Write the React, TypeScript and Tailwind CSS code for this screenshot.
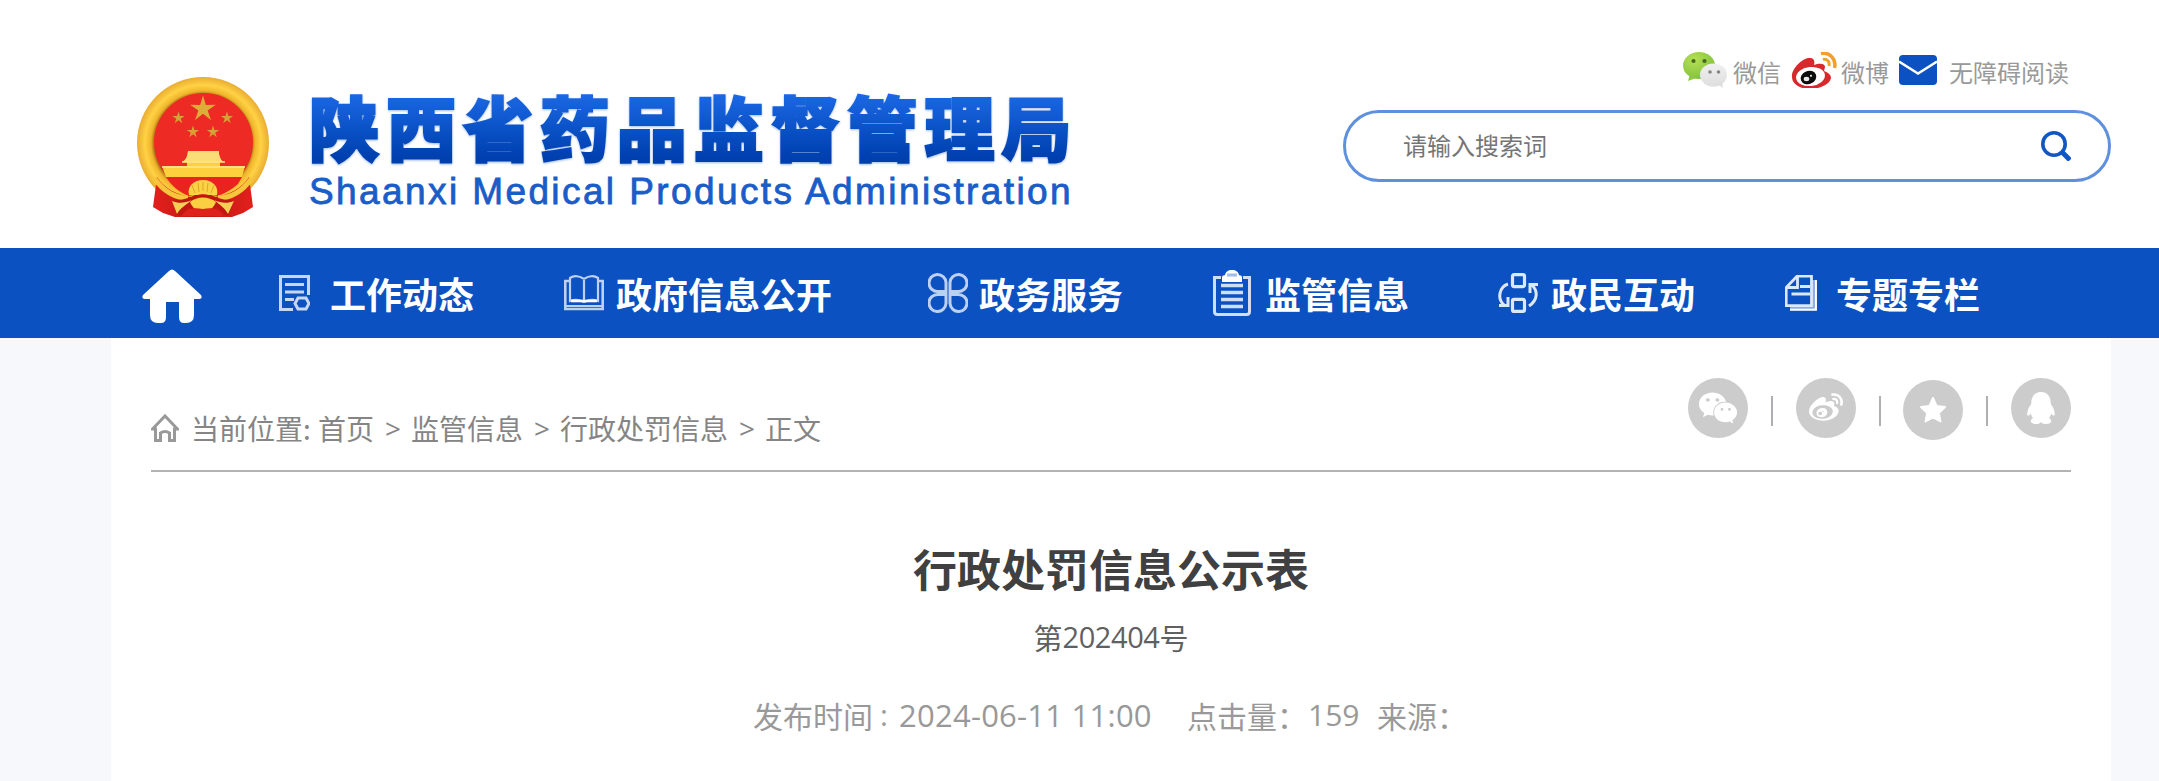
import { FaWeixin, FaWeibo } from "react-icons/fa";

const star = (cx: number, cy: number, r: number) =>
  Array.from({ length: 10 }, (_, i) => {
    const rad = i % 2 === 0 ? r : r * 0.36;
    const a = -Math.PI / 2 + (i * Math.PI) / 5;
    return `${cx + rad * Math.cos(a)},${cy + rad * Math.sin(a)}`;
  }).join(" ");

function Emblem() {
  return (
    <svg width="132" height="140" viewBox="0 0 132 140" className="shrink-0">
      <defs>
        <radialGradient id="ring" cx="0.5" cy="0.5" r="0.5">
          <stop offset="0.74" stopColor="#a87414" />
          <stop offset="0.79" stopColor="#f0b52c" />
          <stop offset="0.88" stopColor="#ffd244" />
          <stop offset="1" stopColor="#e9ac32" />
        </radialGradient>
        <linearGradient id="drape" x1="0" y1="0" x2="1" y2="0">
          <stop offset="0" stopColor="#e2201c" />
          <stop offset="0.5" stopColor="#c11712" />
          <stop offset="1" stopColor="#e2201c" />
        </linearGradient>
      </defs>
      <circle cx="66" cy="66" r="66" fill="url(#ring)" />
      <circle cx="66.5" cy="65.5" r="49.5" fill="#ee2a24" />
      <polygon points={star(66, 32, 13.5)} fill="#dfae38" />
      <polygon points={star(41.5, 41, 6.5)} fill="#d9a035" />
      <polygon points={star(90, 41, 6.5)} fill="#d9a035" />
      <polygon points={star(56, 55, 6.5)} fill="#d9a035" />
      <polygon points={star(76, 55, 6.5)} fill="#d9a035" />
      <path d="M51 74h31v3l1 3c1 3 2 4 4 5H45c2-1 4-3 5-6z" fill="#fbdd78" />
      <path d="M50 84h33v5h25l-3 11H29l-4-11h25z" fill="#fdd13e" />
      <path d="M45 85h43M25 90h83" stroke="#ffe98c" strokeWidth="1.5" />
      <path d="M29 100h76l-4 7c-7 6-14 10-21 12H52c-8-3-16-8-23-19z" fill="#e9241f" />
      <path d="M20 100c7 11 20 18 34 20h24c14-2 27-9 34-20l4 30-10 6-11 4H38l-12-4-10-6z" fill="url(#drape)" />
      <path d="M17 101c10 14 22 20 34 20M115 101c-10 14-22 20-34 20" fill="none" stroke="#f5c63c" strokeWidth="5" />
      <path d="M52 118c-2-8 4-15 14-15s16 7 14 15c-6 2-10-1-14-1s-8 3-14 1z" fill="#fbd244" />
      <path d="M58 116l-3-8M62 115l-1-9M66 114v-9M70 115l1-9M74 116l3-8" stroke="#e1a52a" />
      <path d="M35 124c10-1 18-3 23-6h16c6 3 13 5 23 6l-6 15c-5-2-7-5-11-9-6 6-22 6-28 0-4 4-6 8-11 9z" fill="#c11611" />
      <path d="M35 124c7 3 13 2 20-1-6 5-12 8-15 14zM97 124c-7 3-13 2-20-1 6 5 11 8 14 14z" fill="#f4ce55" />
      <path d="M53 125c7-6 19-6 26 0-5 13-21 13-26 0z" fill="#fbcf42" />
      <path d="M45 139c4-7 10-9 21-7 10-2 17 0 20 7z" fill="#df211c" />
    </svg>
  );
}

function WechatColor() {
  return (
    <svg width="44" height="36" viewBox="0 0 44 36" className="shrink-0">
      <defs>
        <radialGradient id="wg" cx="0.35" cy="0.3" r="0.75">
          <stop offset="0" stopColor="#b5df55" />
          <stop offset="1" stopColor="#80c13c" />
        </radialGradient>
        <linearGradient id="ww" x1="0" y1="0" x2="0" y2="1">
          <stop offset="0" stopColor="#f0f0f0" />
          <stop offset="1" stopColor="#dedede" />
        </linearGradient>
      </defs>
      <ellipse cx="16" cy="13.5" rx="16" ry="13.5" fill="url(#wg)" />
      <path d="M7 22l-2 7 8-3z" fill="#8bc943" />
      <circle cx="10.5" cy="9" r="2.1" fill="#45691d" />
      <circle cx="21.5" cy="9" r="2.1" fill="#45691d" />
      <ellipse cx="30.5" cy="23" rx="13.5" ry="11.5" fill="url(#ww)" />
      <path d="M34 32l6 4-1-7z" fill="#dedede" />
      <circle cx="27" cy="20" r="1.8" fill="#858585" />
      <circle cx="35.5" cy="20" r="1.8" fill="#858585" />
    </svg>
  );
}

function WeiboColor() {
  return (
    <svg width="46" height="36" viewBox="0 0 46 36" className="shrink-0">
      <path d="M1 25C0 17 12 5 19 6c4 0 5 3 4 7 5-2 11-2 11 2l-1 4c5 2 7 4 7 7-1 6-11 11-21 11C9 37 1 32 1 25z" fill="#d8282b" />
      <ellipse cx="19.5" cy="24.5" rx="14.5" ry="9.5" fill="#fff" transform="rotate(-7 19.5 24.5)" />
      <ellipse cx="17.5" cy="25.5" rx="8" ry="6.5" fill="#0b0b0b" transform="rotate(-22 17.5 25.5)" />
      <ellipse cx="15.5" cy="27" rx="2.8" ry="2.2" fill="#e8e8e8" />
      <circle cx="20" cy="23.8" r="1.1" fill="#e8e8e8" />
      <path d="M30 1.5c9-2 15.5 6 13.5 14.5" fill="none" stroke="#efa02e" strokeWidth="3.5" />
      <path d="M32 7.5c4-1 7 2 6 6.5" fill="none" stroke="#efa02e" strokeWidth="3" />
    </svg>
  );
}

const navItems = [
  {
    label: "工作动态",
    item: "ml-[77px]",
    gap: "mr-[20px]",
    icon: (
      <svg width="31" height="36" viewBox="0 0 31 36" fill="none" stroke="#c6d7f3" strokeWidth="3">
        <path d="M29.5 20V1.5H1.5v33H14M6 9.5h19M6 17h19M6 24.5h9" />
        <path d="M19 23h8l3 5.500-3 5.500h-8l-3-5.500z" />
      </svg>
    ),
  },
  {
    label: "政府信息公开",
    item: "ml-[90px]",
    gap: "mr-[12px]",
    icon: (
      <svg width="40" height="36" viewBox="0 0 40 36" fill="none" stroke="#bdd0f1" strokeWidth="2.6">
        <path d="M6 6H1.300v28h37.400V6H34" />
        <path d="M1.500 31h37" strokeWidth="2" />
        <path d="M20 5v21M20 4C16 1 10 0 6 3v23c5-2 10-1 14 1 4-2 9-3 14-1V3c-4-3-10-2-14 1" strokeWidth="2.2" />
        <path d="M7 26h26" stroke="#fff" />
      </svg>
    ),
  },
  {
    label: "政务服务",
    item: "ml-[96px]",
    gap: "mr-[11px]",
    icon: (
      <svg width="40" height="40" viewBox="0 0 40 40" fill="none" stroke="#bdd0f1" strokeWidth="3">
        <path d="M18 18.500h-8a8.500 8.500 0 1 1 8-9zM22 18.500h8a8.500 8.500 0 1 0-8-9zM18 21.500h-8a8.500 8.500 0 1 0 8 9zM22 21.500h8a8.500 8.500 0 1 1-8 9z" />
      </svg>
    ),
  },
  {
    label: "监管信息",
    item: "ml-[90px]",
    gap: "mr-[14px]",
    icon: (
      <svg width="38" height="46" viewBox="0 0 38 46" fill="none" stroke="#d0def5" strokeWidth="3">
        <path d="M8 7.500H1.500v34q0 3 3 3h29q3 0 3-3v-34H30" />
        <path d="M9 12V7q0-1.500 3-2c1-7 13-7 14 0q3 .5 3 2v5z" fill="#fff" stroke="none" />
        <path d="M14 5h10" stroke="#9fbcec" strokeWidth="3" />
        <path d="M8 15.500h22M8 22.500h22M8 29.500h22M8 36.500h22" strokeWidth="3.5" />
      </svg>
    ),
  },
  {
    label: "政民互动",
    item: "ml-[89px]",
    gap: "mr-[12px]",
    icon: (
      <svg width="41" height="40" viewBox="0 0 41 40" fill="none" stroke="#dce7f8" strokeWidth="3.2">
        <rect x="14.5" y="1.6" width="12" height="12" rx="1.5" />
        <rect x="14.5" y="26.4" width="12" height="12" rx="1.5" />
        <path d="M10 11C1 14-1 26 6 32M1 32.500h9V24M31 33c9-6 9-15 3-21M40 11.500h-8V20" strokeWidth="3" />
      </svg>
    ),
  },
  {
    label: "专题专栏",
    item: "ml-[90px]",
    gap: "mr-[19px]",
    icon: (
      <svg width="32" height="36" viewBox="0 0 32 36" fill="none">
        <path d="M30.700 5v29.500H5" stroke="#fff" strokeWidth="2.5" />
        <path d="M28 5v27H5" stroke="#8fb0e6" strokeWidth="3" />
        <path d="M12 1.200h14.500v29.500H1.200V12.500zM12.500 2v10.500H2" stroke="#dce7f8" strokeWidth="2.8" />
        <path d="M15 11.500h10M6.500 19h18.500" stroke="#dce7f8" strokeWidth="2.8" />
      </svg>
    ),
  },
];

const crumbs = [
  { text: "首页", w: "w-[93px]" },
  { text: "监管信息", w: "w-[149px]" },
  { text: "行政处罚信息", w: "w-[205px]" },
];

export default function App() {
  return (
    <div className="min-h-[781px] w-full overflow-hidden bg-[#f6f8fb] font-['Noto_Sans_CJK_SC',sans-serif]">
      <header className="h-[248px] bg-white">
        <div className="ml-[111px] flex w-[2000px] items-start">
          <div className="flex w-[1232px] pl-[26px]">
            <div className="pt-[77px]">
              <Emblem />
            </div>
            <div className="ml-[40px] pt-[85px] whitespace-nowrap">
              <h1 className="bg-linear-to-b from-[#1b69e6] from-10% to-[#003fae] to-90% bg-clip-text text-[70.500px] leading-[81px] font-black tracking-[6.400px] text-transparent drop-shadow-[0_1px_1px_rgba(10,80,190,0.4)] [-webkit-text-stroke:2px_transparent]">
                陕西省药品监督管理局
              </h1>
              <p className="mt-[4px] font-['Liberation_Sans',sans-serif] text-[37px] leading-[44px] tracking-[2.400px] text-[#1a5cc8] [-webkit-text-stroke:0.8px_#1a5cc8]">
                Shaanxi Medical Products Administration
              </p>
            </div>
          </div>
          <div className="w-[768px] pt-[52px]">
            <div className="flex h-[36px] items-start pl-[340px] text-[24px] leading-[40px] whitespace-nowrap text-[#999999]">
              <WechatColor />
              <span className="ml-[6px]">微信</span>
              <span className="ml-[10px]">
                <WeiboColor />
              </span>
              <span className="ml-[4px]">微博</span>
              <svg width="38" height="30" viewBox="0 0 38 30" className="mt-[3px] ml-[10px] shrink-0">
                <rect width="38" height="30" rx="4" fill="#0b51c1" />
                <path d="M0 6.500l19 12 19-12" fill="none" stroke="#fff" strokeWidth="2.4" />
              </svg>
              <span className="ml-[12px]">无障碍阅读</span>
            </div>
            <div className="mt-[22px] flex h-[72px] w-[768px] items-center rounded-full border-[3px] border-[#5f90de] pr-[37px] pl-[57px]">
              <input
                className="mb-[3px] h-[40px] grow bg-transparent text-[24px] outline-none placeholder:text-[#757575]"
                placeholder="请输入搜索词"
              />
              <svg width="30" height="30" viewBox="0 0 30 30" fill="none" stroke="#1256c4" className="shrink-0">
                <circle cx="13" cy="13" r="11.2" strokeWidth="3.6" />
                <path d="M21 21l8 8" strokeWidth="5" />
              </svg>
            </div>
          </div>
        </div>
      </header>

      <nav className="flex h-[90px] items-center bg-[#0b51c1] pl-[142px]">
        <svg width="60" height="54" viewBox="0 0 60 54" className="mt-[6px] shrink-0">
          <path d="M27 2q3-3 6 0l26 24q2 4-2 4h-5v16q0 8-8 8h-2q-5 0-5-6V33H24v15q0 6-5 6h-3q-8 0-8-8V30H3q-4 0-2-4z" fill="#fff" />
        </svg>
        {navItems.map((n) => (
          <div key={n.label} className={`flex items-center ${n.item}`}>
            <span className={n.gap}>{n.icon}</span>
            <span className="mb-[1px] text-[36px] leading-[50px] font-bold whitespace-nowrap text-white">
              {n.label}
            </span>
          </div>
        ))}
      </nav>

      <main className="ml-[111px] h-[443px] w-[2000px] bg-white px-[40px]">
        <div className="flex h-[134px] items-start justify-between border-b-[2px] border-[#b3b3b3]">
          <div className="flex pt-[70px] text-[28px] leading-[40px] whitespace-nowrap text-[#858585]">
            <svg width="28" height="28" viewBox="0 0 28 28" fill="none" stroke="#999" strokeWidth="3" className="mt-[6px] mr-[12px] shrink-0">
              <path d="M1.500 15L14 2l12.500 13H23.500v11.500h-5V19q-4.500-3-9 0v7.500h-5V15z" />
            </svg>
            <span className="w-[127px]">当前位置:</span>
            {crumbs.map((c) => (
              <span key={c.text} className={`flex justify-between pr-[10px] ${c.w}`}>
                <span>{c.text}</span>
                <span className="font-['Open_Sans',sans-serif]">&gt;</span>
              </span>
            ))}
            <span>正文</span>
          </div>
          <div className="flex pt-[40px]">
            <span className="flex size-[60px] items-center justify-center rounded-full bg-[#cccccc]">
              <FaWeixin size={40} color="#fff" />
            </span>
            <span className="mt-[18px] mr-[23px] ml-[23px] h-[30px] w-[2px] bg-[#b0b0b4]" />
            <span className="flex size-[60px] items-center justify-center rounded-full bg-[#cccccc]">
              <FaWeibo size={34} color="#fff" />
            </span>
            <span className="mt-[18px] mr-[22px] ml-[23px] h-[30px] w-[2px] bg-[#b0b0b4]" />
            <span className="mt-[2px] flex size-[60px] items-center justify-center rounded-full bg-[#cccccc]">
              <svg width="28" height="28" viewBox="0 0 28 28">
                <path d="M14 2l3.500 8 8.500 1-6.200 6 1.700 8.500L14 21.300l-7.500 4.200L8.200 17 2 11l8.500-1z" fill="#fff" stroke="#fff" strokeWidth="2" strokeLinejoin="round" />
              </svg>
            </span>
            <span className="mt-[18px] mr-[23px] ml-[23px] h-[30px] w-[2px] bg-[#b0b0b4]" />
            <span className="flex size-[60px] items-center justify-center rounded-full bg-[#cccccc]">
              <svg width="28" height="34" viewBox="0 0 28 34">
                <path d="M14 1C7.500 1 4 6 4.200 13 1.500 17 0 20 .3 24c1.200 1.500 2.500 0 3.500-1.500.5 2 1 3.200 2.200 4.500C1.500 30 4.500 33 9 33c2.500 0 4-.5 5-2 1 1.500 2.500 2 5 2 4.500 0 7.500-3 3-6 1.200-1.300 1.700-2.500 2.200-4.500 1 1.500 2.300 3 3.500 1.500.3-4-1.200-7-3.900-11C24 6 20.500 1 14 1z" fill="#fff" />
              </svg>
            </span>
          </div>
        </div>

        <h2 className="mt-[64px] text-center text-[44px] leading-[64px] font-bold text-[#404040]">
          行政处罚信息公示表
        </h2>
        <p className="mt-[15px] flex h-[44px] items-center justify-center text-[29px] leading-[44px] text-[#606060]">
          第<span className="font-['Open_Sans',sans-serif] tracking-[-0.400px]">202404</span>号
        </p>
        <div className="mt-[34px] flex h-[44px] items-center pl-[602px] text-[30px] leading-[44px] whitespace-pre text-[#999999]">
          <span className="w-[127px]">发布时间</span>
          <span className="w-[19px] font-['Open_Sans',sans-serif]">:</span>
          <span className="w-[288px] font-['Open_Sans',sans-serif] text-[31px] tracking-[0.250px]">2024-06-11 11:00</span>
          <span className="w-[121px]">点击量：</span>
          <span className="w-[69px] font-['Open_Sans',sans-serif]">159</span>
          <span>来源：</span>
        </div>
      </main>
    </div>
  );
}
